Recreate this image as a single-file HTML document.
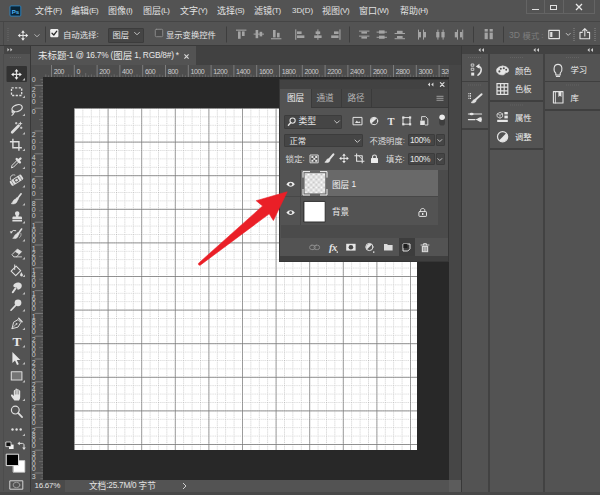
<!DOCTYPE html>
<html lang="zh-CN">
<head>
<meta charset="utf-8">
<title>Photoshop</title>
<style>
*{box-sizing:border-box;margin:0;padding:0}
html,body{width:600px;height:495px;overflow:hidden;background:#535353}
body{font-family:"Liberation Sans","Noto Sans CJK SC",sans-serif;color:#d8d8d8;font-size:9px;position:relative}
.abs{position:absolute}
div,span,svg{position:absolute}
.t{white-space:nowrap;line-height:1}
/* menu */
#menubar{left:0;top:0;width:600px;height:21px;background:#535353}
#menubar .t{top:6.5px;font-size:9px;color:#e2e2e2}
#optbar{left:0;top:21px;width:600px;height:25px;background:#535353;border-top:1px solid #454545;border-bottom:1px solid #3a3a3a}
#tabbar{left:31px;top:46px;width:431px;height:19px;background:#414141}
#tab{left:0;top:0;width:165px;height:19px;background:#535353}
#tools{left:0;top:46px;width:30px;height:449px;background:#535353}
#toolhead{left:3.5px;top:0;width:26.5px;height:7.6px;background:#454545}
#toolsep{left:30px;top:46px;width:1px;height:449px;background:#383838}
#rtop{left:31px;top:65px;width:431px;height:12px;background:#4d4d4d;overflow:hidden}
#rleft{left:31px;top:77px;width:12px;height:403px;background:#4d4d4d}
#view{left:43px;top:77px;width:405.5px;height:403px;background:#282828;overflow:hidden}
#canvas{left:31px;top:30.5px;width:343px;height:342.7px;background:#fff;overflow:hidden}
#vscroll{left:448.5px;top:65px;width:12.5px;height:415px;background:#464646}
#corner{left:448.5px;top:480px;width:12px;height:11.5px;background:#5c5c5c}
#botstrip{left:0;top:491.5px;width:600px;height:3.5px;background:#484848}
#zoomfld{left:31px;top:480px;width:34px;height:12px;background:#4a4a4a}
#status{left:31px;top:480px;width:431px;height:15px}
#rsep{left:461px;top:46px;width:1px;height:449px;background:#383838}
#right{left:462px;top:46px;width:138px;height:449px;background:#424242}
.rcol{top:8px;background:#535353}
.rline{height:1.5px;background:#3f3f3f}
.ptxt{font-size:8.4px;color:#ececec}
/* layers */
#layers{left:279.5px;top:79.5px;width:168px;height:181.2px;background:#535353;box-shadow:0 0 0 1px #363636;overflow:hidden}
#lhead{left:0;top:0;width:170px;height:9px;background:#424242}
#ltabs{left:0;top:9px;width:170px;height:19px;background:#454545;border-bottom:1px solid #3a3a3a}
#ltab1{left:0.5px;top:0;width:30.5px;height:19px;background:#535353}
.dd{background:#454545;border:1px solid #3c3c3c;border-radius:1px}
b{font-weight:normal;font-size:7.9px;letter-spacing:-0.45px;position:static;vertical-align:0.9px}
svg text{font-family:"Liberation Sans","Noto Sans CJK SC",sans-serif}
svg text.serif{font-family:"Liberation Serif",serif}
.rul line{stroke:#909090;stroke-width:0.7}
.rul line.m{stroke:#7c7c7c;stroke-width:0.6}
.rul text{fill:#cccccc;font-size:7px;letter-spacing:-0.45px}
</style>
</head>
<body>
<!-- MENU BAR -->
<div id="menubar">
  <svg style="left:9px;top:4.5px" width="13" height="12" viewBox="0 0 13 12"><rect x="1" y="0.9" width="10.8" height="10.2" rx="1" fill="#0a2436" stroke="#2a86c4" stroke-width="0.9"/><text x="2.7" y="8.7" font-size="6.2" font-weight="bold" fill="#4db4f5">Ps</text></svg>
  <span class="t" style="left:35px">文件<b>(F)</b></span>
  <span class="t" style="left:71px">编辑<b>(E)</b></span>
  <span class="t" style="left:108px">图像<b>(I)</b></span>
  <span class="t" style="left:143px">图层<b>(L)</b></span>
  <span class="t" style="left:180px">文字<b>(Y)</b></span>
  <span class="t" style="left:217px">选择<b>(S)</b></span>
  <span class="t" style="left:254px">滤镜<b>(T)</b></span>
  <span class="t" style="left:292px"><b style="letter-spacing:0">3D(D)</b></span>
  <span class="t" style="left:322px">视图<b>(V)</b></span>
  <span class="t" style="left:359px">窗口<b>(W)</b></span>
  <span class="t" style="left:400px">帮助<b>(H)</b></span>
  <div style="left:526px;top:0;width:69px;height:13.5px;border:1px solid #646464;border-top:none"></div>
  <div style="left:543.7px;top:0;width:1px;height:12.5px;background:#646464"></div>
  <div style="left:563.2px;top:0;width:1px;height:12.5px;background:#646464"></div>
  <div style="left:531.5px;top:8.6px;width:7px;height:1.6px;background:#e0e0e0"></div>
  <div style="left:550.2px;top:4.6px;width:6.8px;height:5.4px;border:1.2px solid #e0e0e0;border-top-width:1.6px"></div>
  <svg style="left:575px;top:3.4px" width="8" height="8" viewBox="0 0 8 8"><path d="M1 1L7 7M7 1L1 7" stroke="#e8e8e8" stroke-width="1.3"/></svg>
</div>

<!-- OPTIONS BAR -->
<div id="optbar">
  <span class="t" style="left:63px;top:9px;font-size:8.4px;color:#e4e4e4">自动选择<b>:</b></span>
  <div class="dd" style="left:108px;top:5.5px;width:35.5px;height:15px"></div>
  <span class="t" style="left:112.5px;top:9px;font-size:8.3px;color:#e4e4e4">图层</span>
  <span class="t" style="left:166px;top:8.5px;font-size:8.3px;color:#e4e4e4">显示变换控件</span>
  <span class="t" style="left:509px;top:9px;font-size:8.3px;color:#7e7e7e"><b style="font-size:8.6px;letter-spacing:0">3D </b><span style="position:static;letter-spacing:0.3px">模式</span><b> :</b></span>
</div>

<!-- TOOLS -->
<div id="tools">
  <div id="toolhead"></div>
</div>
<div id="toolsep"></div>
<div style="left:3px;top:22px;width:1px;height:23px;background:#474747"></div>
<div style="left:3px;top:54px;width:1px;height:437px;background:#4c4c4c"></div>

<!-- DOC TAB -->
<div id="tabbar">
  <div id="tab"><span class="t" style="left:7px;top:5px;font-size:9.5px;color:#e8e8e8">未标题<b style="font-size:8.3px;letter-spacing:-0.2px">-1 @ 16.7% (</b>图层<b style="font-size:8.3px;letter-spacing:-0.2px"> 1, RGB/8#) *</b></span>
  <svg style="left:153px;top:7.5px" width="5" height="5" viewBox="0 0 5 5"><path d="M0.4 0.4L4.6 4.6M4.6 0.4L0.4 4.6" stroke="#d8d8d8" stroke-width="1.1"/></svg></div>
</div>

<!-- RULERS -->
<div id="rtop"><svg class="rul" style="left:12px;top:-1px" width="407" height="13" viewBox="0 0 407 13">
<line class="m" x1="2.8" y1="10.4" x2="2.8" y2="13" />
<line class="m" x1="5.6" y1="11.4" x2="5.6" y2="13" />
<line x1="8.5" y1="0.5" x2="8.5" y2="13" />
<text x="10.7" y="10">200</text>
<line class="m" x1="11.4" y1="11.4" x2="11.4" y2="13" />
<line class="m" x1="14.2" y1="10.4" x2="14.2" y2="13" />
<line class="m" x1="17.0" y1="11.4" x2="17.0" y2="13" />
<line class="m" x1="19.9" y1="9" x2="19.9" y2="13" />
<line class="m" x1="22.8" y1="11.4" x2="22.8" y2="13" />
<line class="m" x1="25.6" y1="10.4" x2="25.6" y2="13" />
<line class="m" x1="28.5" y1="11.4" x2="28.5" y2="13" />
<line x1="31.3" y1="0.5" x2="31.3" y2="13" />
<text x="33.5" y="10">0</text>
<line class="m" x1="34.1" y1="11.4" x2="34.1" y2="13" />
<line class="m" x1="37.0" y1="10.4" x2="37.0" y2="13" />
<line class="m" x1="39.8" y1="11.4" x2="39.8" y2="13" />
<line class="m" x1="42.7" y1="9" x2="42.7" y2="13" />
<line class="m" x1="45.5" y1="11.4" x2="45.5" y2="13" />
<line class="m" x1="48.4" y1="10.4" x2="48.4" y2="13" />
<line class="m" x1="51.2" y1="11.4" x2="51.2" y2="13" />
<line x1="54.1" y1="0.5" x2="54.1" y2="13" />
<text x="56.3" y="10">200</text>
<line class="m" x1="56.9" y1="11.4" x2="56.9" y2="13" />
<line class="m" x1="59.8" y1="10.4" x2="59.8" y2="13" />
<line class="m" x1="62.6" y1="11.4" x2="62.6" y2="13" />
<line class="m" x1="65.5" y1="9" x2="65.5" y2="13" />
<line class="m" x1="68.3" y1="11.4" x2="68.3" y2="13" />
<line class="m" x1="71.2" y1="10.4" x2="71.2" y2="13" />
<line class="m" x1="74.0" y1="11.4" x2="74.0" y2="13" />
<line x1="76.9" y1="0.5" x2="76.9" y2="13" />
<text x="79.1" y="10">400</text>
<line class="m" x1="79.8" y1="11.4" x2="79.8" y2="13" />
<line class="m" x1="82.6" y1="10.4" x2="82.6" y2="13" />
<line class="m" x1="85.5" y1="11.4" x2="85.5" y2="13" />
<line class="m" x1="88.3" y1="9" x2="88.3" y2="13" />
<line class="m" x1="91.2" y1="11.4" x2="91.2" y2="13" />
<line class="m" x1="94.0" y1="10.4" x2="94.0" y2="13" />
<line class="m" x1="96.8" y1="11.4" x2="96.8" y2="13" />
<line x1="99.7" y1="0.5" x2="99.7" y2="13" />
<text x="101.9" y="10">600</text>
<line class="m" x1="102.5" y1="11.4" x2="102.5" y2="13" />
<line class="m" x1="105.4" y1="10.4" x2="105.4" y2="13" />
<line class="m" x1="108.2" y1="11.4" x2="108.2" y2="13" />
<line class="m" x1="111.1" y1="9" x2="111.1" y2="13" />
<line class="m" x1="113.9" y1="11.4" x2="113.9" y2="13" />
<line class="m" x1="116.8" y1="10.4" x2="116.8" y2="13" />
<line class="m" x1="119.6" y1="11.4" x2="119.6" y2="13" />
<line x1="122.5" y1="0.5" x2="122.5" y2="13" />
<text x="124.7" y="10">800</text>
<line class="m" x1="125.3" y1="11.4" x2="125.3" y2="13" />
<line class="m" x1="128.2" y1="10.4" x2="128.2" y2="13" />
<line class="m" x1="131.1" y1="11.4" x2="131.1" y2="13" />
<line class="m" x1="133.9" y1="9" x2="133.9" y2="13" />
<line class="m" x1="136.8" y1="11.4" x2="136.8" y2="13" />
<line class="m" x1="139.6" y1="10.4" x2="139.6" y2="13" />
<line class="m" x1="142.4" y1="11.4" x2="142.4" y2="13" />
<line x1="145.3" y1="0.5" x2="145.3" y2="13" />
<text x="147.5" y="10">1000</text>
<line class="m" x1="148.2" y1="11.4" x2="148.2" y2="13" />
<line class="m" x1="151.0" y1="10.4" x2="151.0" y2="13" />
<line class="m" x1="153.9" y1="11.4" x2="153.9" y2="13" />
<line class="m" x1="156.7" y1="9" x2="156.7" y2="13" />
<line class="m" x1="159.6" y1="11.4" x2="159.6" y2="13" />
<line class="m" x1="162.4" y1="10.4" x2="162.4" y2="13" />
<line class="m" x1="165.2" y1="11.4" x2="165.2" y2="13" />
<line x1="168.1" y1="0.5" x2="168.1" y2="13" />
<text x="170.3" y="10">1200</text>
<line class="m" x1="171.0" y1="11.4" x2="171.0" y2="13" />
<line class="m" x1="173.8" y1="10.4" x2="173.8" y2="13" />
<line class="m" x1="176.7" y1="11.4" x2="176.7" y2="13" />
<line class="m" x1="179.5" y1="9" x2="179.5" y2="13" />
<line class="m" x1="182.4" y1="11.4" x2="182.4" y2="13" />
<line class="m" x1="185.2" y1="10.4" x2="185.2" y2="13" />
<line class="m" x1="188.1" y1="11.4" x2="188.1" y2="13" />
<line x1="190.9" y1="0.5" x2="190.9" y2="13" />
<text x="193.1" y="10">1400</text>
<line class="m" x1="193.7" y1="11.4" x2="193.7" y2="13" />
<line class="m" x1="196.6" y1="10.4" x2="196.6" y2="13" />
<line class="m" x1="199.4" y1="11.4" x2="199.4" y2="13" />
<line class="m" x1="202.3" y1="9" x2="202.3" y2="13" />
<line class="m" x1="205.1" y1="11.4" x2="205.1" y2="13" />
<line class="m" x1="208.0" y1="10.4" x2="208.0" y2="13" />
<line class="m" x1="210.8" y1="11.4" x2="210.8" y2="13" />
<line x1="213.7" y1="0.5" x2="213.7" y2="13" />
<text x="215.9" y="10">1600</text>
<line class="m" x1="216.6" y1="11.4" x2="216.6" y2="13" />
<line class="m" x1="219.4" y1="10.4" x2="219.4" y2="13" />
<line class="m" x1="222.2" y1="11.4" x2="222.2" y2="13" />
<line class="m" x1="225.1" y1="9" x2="225.1" y2="13" />
<line class="m" x1="227.9" y1="11.4" x2="227.9" y2="13" />
<line class="m" x1="230.8" y1="10.4" x2="230.8" y2="13" />
<line class="m" x1="233.6" y1="11.4" x2="233.6" y2="13" />
<line x1="236.5" y1="0.5" x2="236.5" y2="13" />
<text x="238.7" y="10">1800</text>
<line class="m" x1="239.4" y1="11.4" x2="239.4" y2="13" />
<line class="m" x1="242.2" y1="10.4" x2="242.2" y2="13" />
<line class="m" x1="245.1" y1="11.4" x2="245.1" y2="13" />
<line class="m" x1="247.9" y1="9" x2="247.9" y2="13" />
<line class="m" x1="250.8" y1="11.4" x2="250.8" y2="13" />
<line class="m" x1="253.6" y1="10.4" x2="253.6" y2="13" />
<line class="m" x1="256.4" y1="11.4" x2="256.4" y2="13" />
<line x1="259.3" y1="0.5" x2="259.3" y2="13" />
<text x="261.5" y="10">2000</text>
<line class="m" x1="262.2" y1="11.4" x2="262.2" y2="13" />
<line class="m" x1="265.0" y1="10.4" x2="265.0" y2="13" />
<line class="m" x1="267.9" y1="11.4" x2="267.9" y2="13" />
<line class="m" x1="270.7" y1="9" x2="270.7" y2="13" />
<line class="m" x1="273.6" y1="11.4" x2="273.6" y2="13" />
<line class="m" x1="276.4" y1="10.4" x2="276.4" y2="13" />
<line class="m" x1="279.2" y1="11.4" x2="279.2" y2="13" />
<line x1="282.1" y1="0.5" x2="282.1" y2="13" />
<text x="284.3" y="10">2200</text>
<line class="m" x1="285.0" y1="11.4" x2="285.0" y2="13" />
<line class="m" x1="287.8" y1="10.4" x2="287.8" y2="13" />
<line class="m" x1="290.7" y1="11.4" x2="290.7" y2="13" />
<line class="m" x1="293.5" y1="9" x2="293.5" y2="13" />
<line class="m" x1="296.4" y1="11.4" x2="296.4" y2="13" />
<line class="m" x1="299.2" y1="10.4" x2="299.2" y2="13" />
<line class="m" x1="302.1" y1="11.4" x2="302.1" y2="13" />
<line x1="304.9" y1="0.5" x2="304.9" y2="13" />
<text x="307.1" y="10">2400</text>
<line class="m" x1="307.8" y1="11.4" x2="307.8" y2="13" />
<line class="m" x1="310.6" y1="10.4" x2="310.6" y2="13" />
<line class="m" x1="313.5" y1="11.4" x2="313.5" y2="13" />
<line class="m" x1="316.3" y1="9" x2="316.3" y2="13" />
<line class="m" x1="319.2" y1="11.4" x2="319.2" y2="13" />
<line class="m" x1="322.0" y1="10.4" x2="322.0" y2="13" />
<line class="m" x1="324.9" y1="11.4" x2="324.9" y2="13" />
<line x1="327.7" y1="0.5" x2="327.7" y2="13" />
<text x="329.9" y="10">2600</text>
<line class="m" x1="330.6" y1="11.4" x2="330.6" y2="13" />
<line class="m" x1="333.4" y1="10.4" x2="333.4" y2="13" />
<line class="m" x1="336.3" y1="11.4" x2="336.3" y2="13" />
<line class="m" x1="339.1" y1="9" x2="339.1" y2="13" />
<line class="m" x1="342.0" y1="11.4" x2="342.0" y2="13" />
<line class="m" x1="344.8" y1="10.4" x2="344.8" y2="13" />
<line class="m" x1="347.7" y1="11.4" x2="347.7" y2="13" />
<line x1="350.5" y1="0.5" x2="350.5" y2="13" />
<text x="352.7" y="10">2800</text>
<line class="m" x1="353.4" y1="11.4" x2="353.4" y2="13" />
<line class="m" x1="356.2" y1="10.4" x2="356.2" y2="13" />
<line class="m" x1="359.1" y1="11.4" x2="359.1" y2="13" />
<line class="m" x1="361.9" y1="9" x2="361.9" y2="13" />
<line class="m" x1="364.8" y1="11.4" x2="364.8" y2="13" />
<line class="m" x1="367.6" y1="10.4" x2="367.6" y2="13" />
<line class="m" x1="370.4" y1="11.4" x2="370.4" y2="13" />
<line x1="373.3" y1="0.5" x2="373.3" y2="13" />
<text x="375.5" y="10">3000</text>
<line class="m" x1="376.2" y1="11.4" x2="376.2" y2="13" />
<line class="m" x1="379.0" y1="10.4" x2="379.0" y2="13" />
<line class="m" x1="381.9" y1="11.4" x2="381.9" y2="13" />
<line class="m" x1="384.7" y1="9" x2="384.7" y2="13" />
<line class="m" x1="387.6" y1="11.4" x2="387.6" y2="13" />
<line class="m" x1="390.4" y1="10.4" x2="390.4" y2="13" />
<line class="m" x1="393.2" y1="11.4" x2="393.2" y2="13" />
<line x1="396.1" y1="0.5" x2="396.1" y2="13" />
<text x="398.3" y="10">3200</text>
<line class="m" x1="399.0" y1="11.4" x2="399.0" y2="13" />
<line class="m" x1="401.8" y1="10.4" x2="401.8" y2="13" />
<line class="m" x1="404.7" y1="11.4" x2="404.7" y2="13" />
</svg></div>
<div id="rleft"><svg class="rul" style="left:0;top:0" width="12" height="403" viewBox="0 0 12 403">
<text x="2.5" y="4.6" text-anchor="middle">0</text>
<line class="m" x1="9.4" y1="2.7" x2="12" y2="2.7" />
<line class="m" x1="10.4" y1="5.5" x2="12" y2="5.5" />
<line x1="3.5" y1="8.4" x2="12" y2="8.4" />
<text x="2.5" y="14.6" text-anchor="middle">2</text>
<text x="2.5" y="21.0" text-anchor="middle">0</text>
<text x="2.5" y="27.4" text-anchor="middle">0</text>
<line class="m" x1="10.4" y1="11.2" x2="12" y2="11.2" />
<line class="m" x1="9.4" y1="14.1" x2="12" y2="14.1" />
<line class="m" x1="10.4" y1="17.0" x2="12" y2="17.0" />
<line class="m" x1="8" y1="19.8" x2="12" y2="19.8" />
<line class="m" x1="10.4" y1="22.7" x2="12" y2="22.7" />
<line class="m" x1="9.4" y1="25.5" x2="12" y2="25.5" />
<line class="m" x1="10.4" y1="28.4" x2="12" y2="28.4" />
<line x1="3.5" y1="31.2" x2="12" y2="31.2" />
<text x="2.5" y="37.4" text-anchor="middle">0</text>
<line class="m" x1="10.4" y1="34.0" x2="12" y2="34.0" />
<line class="m" x1="9.4" y1="36.9" x2="12" y2="36.9" />
<line class="m" x1="10.4" y1="39.8" x2="12" y2="39.8" />
<line class="m" x1="8" y1="42.6" x2="12" y2="42.6" />
<line class="m" x1="10.4" y1="45.5" x2="12" y2="45.5" />
<line class="m" x1="9.4" y1="48.3" x2="12" y2="48.3" />
<line class="m" x1="10.4" y1="51.2" x2="12" y2="51.2" />
<line x1="3.5" y1="54.0" x2="12" y2="54.0" />
<text x="2.5" y="60.2" text-anchor="middle">2</text>
<text x="2.5" y="66.6" text-anchor="middle">0</text>
<text x="2.5" y="73.0" text-anchor="middle">0</text>
<line class="m" x1="10.4" y1="56.8" x2="12" y2="56.8" />
<line class="m" x1="9.4" y1="59.7" x2="12" y2="59.7" />
<line class="m" x1="10.4" y1="62.6" x2="12" y2="62.6" />
<line class="m" x1="8" y1="65.4" x2="12" y2="65.4" />
<line class="m" x1="10.4" y1="68.2" x2="12" y2="68.2" />
<line class="m" x1="9.4" y1="71.1" x2="12" y2="71.1" />
<line class="m" x1="10.4" y1="73.9" x2="12" y2="73.9" />
<line x1="3.5" y1="76.8" x2="12" y2="76.8" />
<text x="2.5" y="83.0" text-anchor="middle">4</text>
<text x="2.5" y="89.4" text-anchor="middle">0</text>
<text x="2.5" y="95.8" text-anchor="middle">0</text>
<line class="m" x1="10.4" y1="79.7" x2="12" y2="79.7" />
<line class="m" x1="9.4" y1="82.5" x2="12" y2="82.5" />
<line class="m" x1="10.4" y1="85.4" x2="12" y2="85.4" />
<line class="m" x1="8" y1="88.2" x2="12" y2="88.2" />
<line class="m" x1="10.4" y1="91.1" x2="12" y2="91.1" />
<line class="m" x1="9.4" y1="93.9" x2="12" y2="93.9" />
<line class="m" x1="10.4" y1="96.8" x2="12" y2="96.8" />
<line x1="3.5" y1="99.6" x2="12" y2="99.6" />
<text x="2.5" y="105.8" text-anchor="middle">6</text>
<text x="2.5" y="112.2" text-anchor="middle">0</text>
<text x="2.5" y="118.6" text-anchor="middle">0</text>
<line class="m" x1="10.4" y1="102.5" x2="12" y2="102.5" />
<line class="m" x1="9.4" y1="105.3" x2="12" y2="105.3" />
<line class="m" x1="10.4" y1="108.2" x2="12" y2="108.2" />
<line class="m" x1="8" y1="111.0" x2="12" y2="111.0" />
<line class="m" x1="10.4" y1="113.9" x2="12" y2="113.9" />
<line class="m" x1="9.4" y1="116.7" x2="12" y2="116.7" />
<line class="m" x1="10.4" y1="119.6" x2="12" y2="119.6" />
<line x1="3.5" y1="122.4" x2="12" y2="122.4" />
<text x="2.5" y="128.6" text-anchor="middle">8</text>
<text x="2.5" y="135.0" text-anchor="middle">0</text>
<text x="2.5" y="141.4" text-anchor="middle">0</text>
<line class="m" x1="10.4" y1="125.2" x2="12" y2="125.2" />
<line class="m" x1="9.4" y1="128.1" x2="12" y2="128.1" />
<line class="m" x1="10.4" y1="131.0" x2="12" y2="131.0" />
<line class="m" x1="8" y1="133.8" x2="12" y2="133.8" />
<line class="m" x1="10.4" y1="136.7" x2="12" y2="136.7" />
<line class="m" x1="9.4" y1="139.5" x2="12" y2="139.5" />
<line class="m" x1="10.4" y1="142.3" x2="12" y2="142.3" />
<line x1="3.5" y1="145.2" x2="12" y2="145.2" />
<text x="2.5" y="150.8" text-anchor="middle" font-size="5.2" fill="#a4a4a4">1</text>
<text x="2.5" y="155.8" text-anchor="middle" font-size="5.2" fill="#a4a4a4">0</text>
<text x="2.5" y="160.8" text-anchor="middle" font-size="5.2" fill="#a4a4a4">0</text>
<text x="2.5" y="165.8" text-anchor="middle" font-size="5.2" fill="#a4a4a4">0</text>
<line class="m" x1="10.4" y1="148.0" x2="12" y2="148.0" />
<line class="m" x1="9.4" y1="150.9" x2="12" y2="150.9" />
<line class="m" x1="10.4" y1="153.8" x2="12" y2="153.8" />
<line class="m" x1="8" y1="156.6" x2="12" y2="156.6" />
<line class="m" x1="10.4" y1="159.4" x2="12" y2="159.4" />
<line class="m" x1="9.4" y1="162.3" x2="12" y2="162.3" />
<line class="m" x1="10.4" y1="165.1" x2="12" y2="165.1" />
<line x1="3.5" y1="168.0" x2="12" y2="168.0" />
<text x="2.5" y="173.6" text-anchor="middle" font-size="5.2" fill="#a4a4a4">1</text>
<text x="2.5" y="178.6" text-anchor="middle" font-size="5.2" fill="#a4a4a4">2</text>
<text x="2.5" y="183.6" text-anchor="middle" font-size="5.2" fill="#a4a4a4">0</text>
<text x="2.5" y="188.6" text-anchor="middle" font-size="5.2" fill="#a4a4a4">0</text>
<line class="m" x1="10.4" y1="170.8" x2="12" y2="170.8" />
<line class="m" x1="9.4" y1="173.7" x2="12" y2="173.7" />
<line class="m" x1="10.4" y1="176.6" x2="12" y2="176.6" />
<line class="m" x1="8" y1="179.4" x2="12" y2="179.4" />
<line class="m" x1="10.4" y1="182.2" x2="12" y2="182.2" />
<line class="m" x1="9.4" y1="185.1" x2="12" y2="185.1" />
<line class="m" x1="10.4" y1="187.9" x2="12" y2="187.9" />
<line x1="3.5" y1="190.8" x2="12" y2="190.8" />
<text x="2.5" y="196.4" text-anchor="middle" font-size="5.2" fill="#a4a4a4">1</text>
<text x="2.5" y="201.4" text-anchor="middle" font-size="5.2" fill="#a4a4a4">4</text>
<text x="2.5" y="206.4" text-anchor="middle" font-size="5.2" fill="#a4a4a4">0</text>
<text x="2.5" y="211.4" text-anchor="middle" font-size="5.2" fill="#a4a4a4">0</text>
<line class="m" x1="10.4" y1="193.7" x2="12" y2="193.7" />
<line class="m" x1="9.4" y1="196.5" x2="12" y2="196.5" />
<line class="m" x1="10.4" y1="199.4" x2="12" y2="199.4" />
<line class="m" x1="8" y1="202.2" x2="12" y2="202.2" />
<line class="m" x1="10.4" y1="205.1" x2="12" y2="205.1" />
<line class="m" x1="9.4" y1="207.9" x2="12" y2="207.9" />
<line class="m" x1="10.4" y1="210.8" x2="12" y2="210.8" />
<line x1="3.5" y1="213.6" x2="12" y2="213.6" />
<text x="2.5" y="219.2" text-anchor="middle" font-size="5.2" fill="#a4a4a4">1</text>
<text x="2.5" y="224.2" text-anchor="middle" font-size="5.2" fill="#a4a4a4">6</text>
<text x="2.5" y="229.2" text-anchor="middle" font-size="5.2" fill="#a4a4a4">0</text>
<text x="2.5" y="234.2" text-anchor="middle" font-size="5.2" fill="#a4a4a4">0</text>
<line class="m" x1="10.4" y1="216.5" x2="12" y2="216.5" />
<line class="m" x1="9.4" y1="219.3" x2="12" y2="219.3" />
<line class="m" x1="10.4" y1="222.2" x2="12" y2="222.2" />
<line class="m" x1="8" y1="225.0" x2="12" y2="225.0" />
<line class="m" x1="10.4" y1="227.9" x2="12" y2="227.9" />
<line class="m" x1="9.4" y1="230.7" x2="12" y2="230.7" />
<line class="m" x1="10.4" y1="233.6" x2="12" y2="233.6" />
<line x1="3.5" y1="236.4" x2="12" y2="236.4" />
<text x="2.5" y="242.0" text-anchor="middle" font-size="5.2" fill="#a4a4a4">1</text>
<text x="2.5" y="247.0" text-anchor="middle" font-size="5.2" fill="#a4a4a4">8</text>
<text x="2.5" y="252.0" text-anchor="middle" font-size="5.2" fill="#a4a4a4">0</text>
<text x="2.5" y="257.0" text-anchor="middle" font-size="5.2" fill="#a4a4a4">0</text>
<line class="m" x1="10.4" y1="239.3" x2="12" y2="239.3" />
<line class="m" x1="9.4" y1="242.1" x2="12" y2="242.1" />
<line class="m" x1="10.4" y1="245.0" x2="12" y2="245.0" />
<line class="m" x1="8" y1="247.8" x2="12" y2="247.8" />
<line class="m" x1="10.4" y1="250.7" x2="12" y2="250.7" />
<line class="m" x1="9.4" y1="253.5" x2="12" y2="253.5" />
<line class="m" x1="10.4" y1="256.4" x2="12" y2="256.4" />
<line x1="3.5" y1="259.2" x2="12" y2="259.2" />
<text x="2.5" y="264.8" text-anchor="middle" font-size="5.2" fill="#a4a4a4">2</text>
<text x="2.5" y="269.8" text-anchor="middle" font-size="5.2" fill="#a4a4a4">0</text>
<text x="2.5" y="274.8" text-anchor="middle" font-size="5.2" fill="#a4a4a4">0</text>
<text x="2.5" y="279.8" text-anchor="middle" font-size="5.2" fill="#a4a4a4">0</text>
<line class="m" x1="10.4" y1="262.1" x2="12" y2="262.1" />
<line class="m" x1="9.4" y1="264.9" x2="12" y2="264.9" />
<line class="m" x1="10.4" y1="267.8" x2="12" y2="267.8" />
<line class="m" x1="8" y1="270.6" x2="12" y2="270.6" />
<line class="m" x1="10.4" y1="273.4" x2="12" y2="273.4" />
<line class="m" x1="9.4" y1="276.3" x2="12" y2="276.3" />
<line class="m" x1="10.4" y1="279.1" x2="12" y2="279.1" />
<line x1="3.5" y1="282.0" x2="12" y2="282.0" />
<text x="2.5" y="287.6" text-anchor="middle" font-size="5.2" fill="#a4a4a4">2</text>
<text x="2.5" y="292.6" text-anchor="middle" font-size="5.2" fill="#a4a4a4">2</text>
<text x="2.5" y="297.6" text-anchor="middle" font-size="5.2" fill="#a4a4a4">0</text>
<text x="2.5" y="302.6" text-anchor="middle" font-size="5.2" fill="#a4a4a4">0</text>
<line class="m" x1="10.4" y1="284.9" x2="12" y2="284.9" />
<line class="m" x1="9.4" y1="287.7" x2="12" y2="287.7" />
<line class="m" x1="10.4" y1="290.6" x2="12" y2="290.6" />
<line class="m" x1="8" y1="293.4" x2="12" y2="293.4" />
<line class="m" x1="10.4" y1="296.2" x2="12" y2="296.2" />
<line class="m" x1="9.4" y1="299.1" x2="12" y2="299.1" />
<line class="m" x1="10.4" y1="301.9" x2="12" y2="301.9" />
<line x1="3.5" y1="304.8" x2="12" y2="304.8" />
<text x="2.5" y="310.4" text-anchor="middle" font-size="5.2" fill="#a4a4a4">2</text>
<text x="2.5" y="315.4" text-anchor="middle" font-size="5.2" fill="#a4a4a4">4</text>
<text x="2.5" y="320.4" text-anchor="middle" font-size="5.2" fill="#a4a4a4">0</text>
<text x="2.5" y="325.4" text-anchor="middle" font-size="5.2" fill="#a4a4a4">0</text>
<line class="m" x1="10.4" y1="307.7" x2="12" y2="307.7" />
<line class="m" x1="9.4" y1="310.5" x2="12" y2="310.5" />
<line class="m" x1="10.4" y1="313.4" x2="12" y2="313.4" />
<line class="m" x1="8" y1="316.2" x2="12" y2="316.2" />
<line class="m" x1="10.4" y1="319.1" x2="12" y2="319.1" />
<line class="m" x1="9.4" y1="321.9" x2="12" y2="321.9" />
<line class="m" x1="10.4" y1="324.8" x2="12" y2="324.8" />
<line x1="3.5" y1="327.6" x2="12" y2="327.6" />
<text x="2.5" y="333.2" text-anchor="middle" font-size="5.2" fill="#a4a4a4">2</text>
<text x="2.5" y="338.2" text-anchor="middle" font-size="5.2" fill="#a4a4a4">6</text>
<text x="2.5" y="343.2" text-anchor="middle" font-size="5.2" fill="#a4a4a4">0</text>
<text x="2.5" y="348.2" text-anchor="middle" font-size="5.2" fill="#a4a4a4">0</text>
<line class="m" x1="10.4" y1="330.5" x2="12" y2="330.5" />
<line class="m" x1="9.4" y1="333.3" x2="12" y2="333.3" />
<line class="m" x1="10.4" y1="336.2" x2="12" y2="336.2" />
<line class="m" x1="8" y1="339.0" x2="12" y2="339.0" />
<line class="m" x1="10.4" y1="341.9" x2="12" y2="341.9" />
<line class="m" x1="9.4" y1="344.7" x2="12" y2="344.7" />
<line class="m" x1="10.4" y1="347.6" x2="12" y2="347.6" />
<line x1="3.5" y1="350.4" x2="12" y2="350.4" />
<text x="2.5" y="356.0" text-anchor="middle" font-size="5.2" fill="#a4a4a4">2</text>
<text x="2.5" y="361.0" text-anchor="middle" font-size="5.2" fill="#a4a4a4">8</text>
<text x="2.5" y="366.0" text-anchor="middle" font-size="5.2" fill="#a4a4a4">0</text>
<text x="2.5" y="371.0" text-anchor="middle" font-size="5.2" fill="#a4a4a4">0</text>
<line class="m" x1="10.4" y1="353.2" x2="12" y2="353.2" />
<line class="m" x1="9.4" y1="356.1" x2="12" y2="356.1" />
<line class="m" x1="10.4" y1="358.9" x2="12" y2="358.9" />
<line class="m" x1="8" y1="361.8" x2="12" y2="361.8" />
<line class="m" x1="10.4" y1="364.6" x2="12" y2="364.6" />
<line class="m" x1="9.4" y1="367.5" x2="12" y2="367.5" />
<line class="m" x1="10.4" y1="370.3" x2="12" y2="370.3" />
<line x1="3.5" y1="373.2" x2="12" y2="373.2" />
<text x="2.5" y="378.8" text-anchor="middle" font-size="5.2" fill="#a4a4a4">3</text>
<text x="2.5" y="383.8" text-anchor="middle" font-size="5.2" fill="#a4a4a4">0</text>
<text x="2.5" y="388.8" text-anchor="middle" font-size="5.2" fill="#a4a4a4">0</text>
<text x="2.5" y="393.8" text-anchor="middle" font-size="5.2" fill="#a4a4a4">0</text>
<line class="m" x1="10.4" y1="376.1" x2="12" y2="376.1" />
<line class="m" x1="9.4" y1="378.9" x2="12" y2="378.9" />
<line class="m" x1="10.4" y1="381.8" x2="12" y2="381.8" />
<line class="m" x1="8" y1="384.6" x2="12" y2="384.6" />
<line class="m" x1="10.4" y1="387.4" x2="12" y2="387.4" />
<line class="m" x1="9.4" y1="390.3" x2="12" y2="390.3" />
<line class="m" x1="10.4" y1="393.1" x2="12" y2="393.1" />
<line x1="3.5" y1="396.0" x2="12" y2="396.0" />
<text x="2.5" y="401.6" text-anchor="middle" font-size="5.2" fill="#a4a4a4">3</text>
<line class="m" x1="10.4" y1="398.9" x2="12" y2="398.9" />
<line class="m" x1="9.4" y1="401.7" x2="12" y2="401.7" />
</svg></div>

<!-- VIEW -->
<div id="view">
  <div id="canvas">
    <svg style="left:0;top:0" width="343" height="343" viewBox="0 0 343 343">
      <defs>
        <pattern id="minor" width="8.4" height="8.4" patternUnits="userSpaceOnUse"><path d="M0 0H8.4M0 0V8.4" stroke="#a6a6a6" stroke-width="1" stroke-dasharray="1.05 1.05" fill="none"/></pattern>
        <pattern id="major" width="33.6" height="33.6" patternUnits="userSpaceOnUse"><path d="M0 0H33.6M0 0V33.6" stroke="#747474" stroke-width="1.3" fill="none"/></pattern>
      </defs>
      <rect width="343" height="343" fill="#fff"/>
      <rect width="343" height="343" fill="url(#minor)"/>
      <rect width="343" height="343" fill="url(#major)"/>
    </svg>
  </div>
</div>
<div id="vscroll"></div>
<div id="corner"></div>

<!-- STATUS -->
<div id="zoomfld"></div>
<div id="status">
  <span class="t" style="left:3.5px;top:2.4px;font-size:9px;color:#e4e4e4"><b style="font-size:8px;letter-spacing:-0.25px">16.67%</b></span>
  <span class="t" style="left:58px;top:2.4px;font-size:8.6px;color:#e4e4e4">文档<b style="font-size:8.2px;letter-spacing:-0.2px">:25.7M/0 </b>字节</span>
  <svg style="left:151px;top:2px" width="5" height="8" viewBox="0 0 5 8"><path d="M1 1L4 4L1 7" stroke="#cfcfcf" stroke-width="1" fill="none"/></svg>
</div>

<!-- RIGHT -->
<div id="rsep"></div>
<div id="right">
  <div class="rcol" style="left:0;width:25.5px;height:441px"></div>
  <div class="rcol" style="left:27.5px;width:53.5px;height:441px"></div>
  <div class="rcol" style="left:83px;width:55px;height:441px"></div>
  <div class="rline" style="left:0;top:34.5px;width:25.5px"></div>
  <div class="rline" style="left:0;top:82px;width:25.5px"></div>
  <div class="rline" style="left:27.5px;top:54px;width:53.5px"></div>
  <div class="rline" style="left:27.5px;top:102px;width:53.5px"></div>
  <div class="rline" style="left:83px;top:34.5px;width:55px"></div>
  <div class="rline" style="left:83px;top:63px;width:55px"></div>
  <span class="t ptxt" style="left:53px;top:20.8px">颜色</span>
  <span class="t ptxt" style="left:53px;top:39.3px">色板</span>
  <span class="t ptxt" style="left:53px;top:67.8px">属性</span>
  <span class="t ptxt" style="left:53px;top:86.9px">调整</span>
  <span class="t ptxt" style="left:108.5px;top:19.7px">学习</span>
  <span class="t ptxt" style="left:108.5px;top:48.2px">库</span>
</div>

<!-- LAYERS PANEL -->
<div id="layers">
  <div id="lhead"></div>
  <div id="ltabs">
    <div id="ltab1"></div>
    <div style="left:31px;top:0;width:1px;height:19px;background:#3a3a3a"></div>
    <div style="left:61px;top:0;width:1px;height:19px;background:#3a3a3a"></div>
    <div style="left:91px;top:0;width:1px;height:19px;background:#3a3a3a"></div>
    <span class="t" style="left:7.5px;top:5.5px;font-size:8.6px;color:#f0f0f0">图层</span>
    <span class="t" style="left:37px;top:5.5px;font-size:8.6px;color:#b4b4b4">通道</span>
    <span class="t" style="left:68px;top:5.5px;font-size:8.6px;color:#b4b4b4">路径</span>
  </div>
  <!-- filter row -->
  <div class="dd" style="left:4px;top:35px;width:58px;height:14px"></div>
  <span class="t" style="left:19px;top:37.5px;font-size:8.8px;color:#e6e6e6">类型</span>
  <!-- blend row -->
  <div class="dd" style="left:4px;top:54.5px;width:79px;height:12.5px"></div>
  <span class="t" style="left:10px;top:57.4px;font-size:8.3px;color:#e8e8e8">正常</span>
  <span class="t" style="left:90px;top:57px;font-size:8.3px;color:#dcdcdc">不透明度<b>:</b></span>
  <div class="dd" style="left:128px;top:54.5px;width:27px;height:12px"></div>
  <div class="dd" style="left:156.5px;top:54.5px;width:9px;height:12px"></div>
  <span class="t" style="left:130.5px;top:56.2px;font-size:8.4px;color:#e8e8e8;letter-spacing:-0.3px">100%</span>
  <!-- lock row -->
  <span class="t" style="left:6px;top:75.3px;font-size:8.5px;color:#dcdcdc">锁定<b>:</b></span>
  <span class="t" style="left:106.5px;top:75.6px;font-size:8.3px;color:#dcdcdc">填充<b>:</b></span>
  <div class="dd" style="left:128px;top:73.5px;width:27px;height:12px"></div>
  <div class="dd" style="left:156.5px;top:73.5px;width:9px;height:12px"></div>
  <span class="t" style="left:130.5px;top:75.2px;font-size:8.4px;color:#e8e8e8;letter-spacing:-0.3px">100%</span>
  <!-- list -->
  <div style="left:1px;top:90.5px;width:168px;height:67.5px;background:#4b4b4b"></div>
  <div style="left:1px;top:90.5px;width:20px;height:54.5px;background:#535353"></div>
  <div style="left:21px;top:90.5px;width:137px;height:25.5px;background:#696969"></div>
  <div style="left:21px;top:117px;width:137px;height:28px;background:#535353"></div>
  <div style="left:1px;top:116px;width:157px;height:1px;background:#474747"></div>
  <div style="left:20.5px;top:90.5px;width:1px;height:54.5px;background:#474747"></div>
  <span class="t" style="left:52.5px;top:100px;font-size:8.6px;color:#f2f2f2">图层 <b style="font-size:8.4px">1</b></span>
  <span class="t" style="left:52.5px;top:128.5px;font-size:8.6px;color:#eaeaea">背景</span>
  <!-- bottom bar -->
  <div style="left:0;top:158px;width:170px;height:18px;background:#535353"></div>
  <div style="left:119px;top:158px;width:16px;height:18px;background:#3d3d3d"></div>
  <div style="left:0;top:176px;width:170px;height:6px;background:#3f3f3f"></div>
</div>

<div id="botstrip"></div>
<!-- ICON OVERLAY -->
<svg id="icons" style="left:0;top:0" width="600" height="495" viewBox="0 0 600 495" fill="none" stroke-linecap="round" stroke-linejoin="round">
<g id="opticons" stroke="#dedede" fill="none" stroke-width="1.2">
<!-- grip -->
<path d="M8 28V41" stroke="#666666" stroke-width="1.2" stroke-dasharray="1 1" stroke-linecap="butt"/>
<!-- move icon -->
<g transform="translate(23,35.5) scale(0.9)"><path d="M-3.6 0H3.6M0 -3.6V3.6" stroke-width="1.2"/><path d="M0 -5.8L-2.1 -3.1H2.1ZM0 5.8L-2.1 3.1H2.1ZM-5.8 0L-3.1 -2.1V2.1ZM5.8 0L3.1 -2.1V2.1Z" fill="#ececec" stroke="none"/></g>
<path d="M34.8 34.6L37 36.8L39.2 34.6" stroke="#b8b8b8" stroke-width="1"/>
<path d="M45.5 26.5V42.5" stroke="#3e3e3e" stroke-width="1" stroke-linecap="butt"/>
<!-- checkbox checked -->
<rect x="50.2" y="29" width="8.2" height="8.2" rx="1.2" fill="#efefef" stroke="none"/>
<path d="M52 33.2L53.8 35L56.8 31.2" stroke="#2c2c2c" stroke-width="1.3"/>
<!-- dropdown chevron -->
<path d="M134.6 32.4L137 34.8L139.4 32.4" stroke="#c4c4c4" stroke-width="1"/>
<!-- checkbox unchecked -->
<rect x="155.3" y="29.3" width="7.4" height="7.4" rx="1" fill="#4a4a4a" stroke="#8e8e8e" stroke-width="0.9"/>
<!-- separators -->
<g stroke="#3e3e3e" stroke-width="1" stroke-linecap="butt"><path d="M226.5 26.5V42.5M349.5 26.5V42.5M473.5 26.5V42.5M503.5 26.5V42.5"/></g>
<!-- align icons -->
<g fill="#a4a4a4" stroke="none">
<!-- align top -->
<rect x="236" y="29.6" width="10.4" height="1.1"/><rect x="238" y="31.4" width="2.6" height="7.4"/><rect x="242" y="31.4" width="2.6" height="4.6"/>
<!-- align vcenter -->
<rect x="253.6" y="33.6" width="10.4" height="1"/><rect x="255.6" y="30" width="2.6" height="8.2"/><rect x="259.6" y="31.8" width="2.6" height="4.6"/>
<!-- align bottom -->
<rect x="271" y="38.2" width="10.4" height="1.1"/><rect x="273" y="30" width="2.6" height="7.4"/><rect x="277" y="32.8" width="2.6" height="4.6"/>
<!-- align left -->
<rect x="295.2" y="29.4" width="1.1" height="10.4"/><rect x="297" y="31.4" width="4.6" height="2.6"/><rect x="297" y="35.4" width="7.4" height="2.6"/>
<!-- align hcenter -->
<rect x="317.4" y="29.4" width="1" height="10.4"/><rect x="315.6" y="31.4" width="4.6" height="2.6"/><rect x="314.2" y="35.4" width="7.4" height="2.6"/>
<!-- align right -->
<rect x="339.4" y="29.4" width="1.1" height="10.4"/><rect x="334" y="31.4" width="4.6" height="2.6"/><rect x="331.2" y="35.4" width="7.4" height="2.6"/>
<!-- distribute top -->
<rect x="359" y="30.6" width="10.4" height="1"/><rect x="361.4" y="31.6" width="5.6" height="2"/><rect x="359" y="35.6" width="10.4" height="1"/><rect x="361.4" y="36.6" width="5.6" height="2"/>
<!-- distribute vcenter -->
<rect x="376.6" y="31.6" width="10.4" height="1"/><rect x="379" y="30.4" width="5.6" height="3.2"/><rect x="376.6" y="36.8" width="10.4" height="1"/><rect x="379" y="35.6" width="5.6" height="3.2"/>
<!-- distribute bottom -->
<rect x="394.6" y="33" width="10.4" height="1"/><rect x="397" y="30.8" width="5.6" height="2.2"/><rect x="394.6" y="38.2" width="10.4" height="1"/><rect x="397" y="36" width="5.6" height="2.2"/>
<!-- distribute left -->
<rect x="418" y="29.6" width="1" height="10"/><rect x="419" y="32" width="2" height="5.4"/><rect x="423" y="29.6" width="1" height="10"/><rect x="424" y="32" width="2" height="5.4"/>
<!-- distribute hcenter -->
<rect x="437.4" y="29.6" width="1" height="10"/><rect x="436.2" y="32" width="3.2" height="5.4"/><rect x="442.6" y="29.6" width="1" height="10"/><rect x="441.4" y="32" width="3.2" height="5.4"/>
<!-- distribute right -->
<rect x="457" y="29.6" width="1" height="10"/><rect x="454.8" y="32" width="2.2" height="5.4"/><rect x="462.2" y="29.6" width="1" height="10"/><rect x="460" y="32" width="2.2" height="5.4"/>
<!-- auto align -->
<rect x="484.6" y="29" width="3.2" height="2.6"/><rect x="489.6" y="29" width="3.2" height="2.6"/><rect x="484.6" y="32.6" width="3.2" height="6.6"/><rect x="489.6" y="32.6" width="3.2" height="6.6"/>
</g>
<!-- workspace icon -->
<rect x="548.8" y="30.4" width="10.6" height="8.2" stroke="#e0e0e0" stroke-width="1.1"/><rect x="550.2" y="32" width="2.2" height="5" fill="#e0e0e0" stroke="none"/>
<path d="M566.2 33.4L568.2 35.4L570.2 33.4" stroke="#c4c4c4" stroke-width="1"/>
<path d="M574 28V41M595 28V41" stroke="#8a8a8a" stroke-width="1" stroke-dasharray="1 1" stroke-linecap="butt"/>
<!-- share -->
<path d="M582.2 32.4H580V38.8H589.6V32.4H587.4" stroke="#e4e4e4" stroke-width="1.1"/><path d="M584.8 36V28.8M582.6 30.8L584.8 28.6L587 30.8" stroke="#e4e4e4" stroke-width="1.1"/>
</g>

<g id="toolicons" stroke="#dedede" fill="none" stroke-width="1.2">
<!-- toolbar header arrows -->
<path d="M7.4 48L9.3 49.8L7.4 51.6ZM10.4 48L12.3 49.8L10.4 51.6Z" fill="#d0d0d0" stroke="none"/>
<!-- grip -->
<path d="M10 57.5H22" stroke="#656565" stroke-width="1" stroke-dasharray="1 1" stroke-linecap="butt"/>
<!-- selected bg -->
<rect x="6.5" y="66" width="20.5" height="16" rx="1" fill="#323232" stroke="none"/>
<!-- move -->
<g transform="translate(16.5,74.4) scale(0.86)"><path d="M-4 0H4M0 -4V4" stroke-width="1.4"/><path d="M0 -6.2L-2.3 -3.3H2.3ZM0 6.2L-2.3 3.3H2.3ZM-6.2 0L-3.3 -2.3V2.3ZM6.2 0L3.3 -2.3V2.3Z" fill="#f0f0f0" stroke="none"/></g>
<!-- marquee -->
<rect x="11.5" y="87.9" width="10.2" height="7.6" stroke-dasharray="2.2 1.4" stroke-linecap="butt" stroke-width="1.3"/>
<!-- lasso -->
<g transform="translate(17,109.5)"><ellipse cx="0.5" cy="-1.2" rx="5.3" ry="3.3" transform="rotate(-18)"/><path d="M-4.2 0.8C-5.6 1.8 -5 3.8 -3.4 3.4C-2 3 -2.6 1.2 -4 1.6M-3.6 3.4C-3.4 4.6 -4 5.4 -5 5.8"/></g>
<!-- magic wand -->
<g transform="translate(16.8,127.6)"><path d="M-4.6 4.6L1.8 -1.8" stroke-width="2.7"/><path d="M3.6 -5.4V-2.6M2.2 -4H5M-0.6 -5.2V-3.6M-1.4 -4.4H0.2M4.4 -0.6V1M3.6 0.2H5.2" stroke-width="0.9"/></g>
<!-- crop -->
<g transform="translate(15.9,144.7)"><path d="M-3 -6V3H6M-6 -3H3V6" stroke-width="1.4" stroke-linecap="butt" stroke-linejoin="miter"/></g>
<!-- eyedropper -->
<g transform="translate(16.5,162.5)"><path d="M-5 5L-4.4 2.8L0.6 -2.2L2.2 -0.6L-2.8 4.4Z" stroke-width="1"/><path d="M0.2 -3.4L3.4 -0.2M1.8 -1.8L4 -4" stroke-width="2.4"/></g>
<!-- healing -->
<g transform="translate(16.5,180.2)"><g transform="rotate(-33)"><rect x="-6.8" y="-2.9" width="13.6" height="5.8" rx="1.4" fill="#dedede" stroke="none"/><rect x="-2.2" y="-2" width="4.4" height="4" fill="#535353" stroke="none"/><rect x="-1.3" y="-1.1" width="2.6" height="2.2" fill="#dedede" stroke="none"/><path d="M-4.6 -2.9V2.9M4.6 -2.9V2.9" stroke="#535353" stroke-width="0.5"/></g><path d="M-5.8 -0.6A3.3 3.3 0 0 1 -1 -4.8" stroke-width="0.9" stroke-dasharray="1.2 1"/></g>
<!-- brush -->
<g transform="translate(16.5,199)"><path d="M4.6 -5.2L0.6 0" stroke-width="1.7"/><path d="M1.4 -1L-1 2" stroke-width="2.8" stroke-linecap="butt"/><path d="M-1.2 0.2C-3.6 0.4 -3.2 3.4 -5.4 4.6C-3 5.6 0.4 4.6 0.8 1.8Z" fill="#dedede" stroke-width="0.5"/></g>
<!-- stamp -->
<g transform="translate(17.2,216.6)"><rect x="-4.8" y="3.4" width="9.6" height="1.5" fill="#dedede" stroke="none"/><path d="M-4.8 2.6V1.2C-4.8 0.4 -4.2 0 -3.4 0H-1.2C-0.8 -1 -2.2 -1.8 -2.2 -3.2C-2.2 -4.5 -1.2 -5.4 0 -5.4C1.2 -5.4 2.2 -4.5 2.2 -3.2C2.2 -1.8 0.8 -1 1.2 0H3.4C4.2 0 4.8 0.4 4.8 1.2V2.6Z" fill="#dedede" stroke="none"/></g>
<!-- history brush -->
<g transform="translate(16.4,234.6)"><path d="M5.2 -5.6L1.6 -0.6" stroke-width="1.6"/><path d="M2.2 -1.6L0.2 1.2" stroke-width="2.6" stroke-linecap="butt"/><path d="M0 -0.4C-2.2 -0.2 -1.8 2.6 -3.8 3.6C-1.6 4.6 1.4 3.8 1.8 1.2Z" fill="#dedede" stroke-width="0.5"/><path d="M-5.2 -2.4A3.6 3.6 0 0 1 -0.6 -4" stroke-width="1"/><path d="M-6.6 -3.4L-5.4 -0.8L-3.6 -2.8Z" fill="#dedede" stroke="none"/><path d="M4.4 -1.4C5 0.4 4.4 2 3.2 3" stroke-width="0.7" stroke-dasharray="1 0.9"/></g>
<!-- eraser -->
<g transform="translate(17,253) scale(0.84)"><path d="M-5.6 1.6L0.4 -4.6L5.4 -1.6L-0.6 4.6H-3.4Z" stroke-width="1.1"/><path d="M-2.4 -1.6L0.4 -4.6L5.4 -1.6L2.6 1.4Z" fill="#dedede" stroke="none"/><path d="M-0.6 4.6H5.4" stroke-width="1"/></g>
<!-- bucket -->
<g transform="translate(16.5,270.5)"><path d="M-5.4 0.6L-0.4 -4.4L4.2 0.2L-0.8 5.2Z" stroke-width="1.1"/><path d="M-1.8 -5.6L-1.8 -1" stroke-width="1"/><path d="M4.6 1.4C5.6 2.8 6.4 3.8 6.4 4.6C6.4 5.6 5.6 6 5 6C4.2 6 3.6 5.4 3.6 4.6C3.6 3.6 4.4 2.8 4.6 1.4Z" fill="#dedede" stroke="none"/></g>
<!-- smudge -->
<g transform="translate(17,287.6)"><path d="M-4.2 4.6L-1.4 0.6" stroke-width="2"/><path d="M-3.8 -1.6C-3.4 -5 1.8 -6.4 4 -4C6 -1.6 4 2.4 0.6 2.2C0.4 0.6 -0.4 -0.6 -1.6 -0.4C-2.6 -0.2 -3.2 -0.6 -3.8 -1.6Z" fill="#dedede" stroke="none"/></g>
<!-- dodge -->
<g transform="translate(16,305)"><circle cx="2" cy="-2.2" r="3.4" fill="#dedede" stroke="none"/><path d="M-0.6 0.6L-5 5.2" stroke-width="1.6"/></g>
<!-- pen -->
<g transform="translate(16.8,323.6) scale(0.88)"><path d="M-5.4 5.4L-3.6 -1.6L1.4 -4.6L4.6 -1.4L1.6 3.6Z" stroke-width="1.1"/><path d="M-5.4 5.4L-0.8 0.8" stroke-width="0.9"/><circle cx="-0.2" cy="0.2" r="1" fill="#dedede" stroke="none"/><path d="M2.2 -6L6 -2.2" stroke-width="1.6"/></g>
<!-- T -->
<text x="17" y="345.6" text-anchor="middle" class="serif" font-weight="bold" font-size="13.4" fill="#e8e8e8" stroke="none">T</text>
<!-- path select -->
<path d="M12.4 352L12.4 363L15 360.6L17 365L18.8 364.2L16.8 360L20.4 360Z" fill="#e6e6e6" stroke="none"/>
<!-- rectangle -->
<rect x="11.3" y="371.8" width="10.6" height="8.2" fill="#757575" stroke="#d8d8d8" stroke-width="1.1"/>
<!-- hand -->
<g transform="translate(17,394.5)"><path d="M-2.6 6C-3.6 4.2 -5.6 2.6 -6 1C-6.2 0 -5 -0.4 -4.2 0.4L-3.2 1.6V-3.6C-3.2 -4.8 -1.6 -4.8 -1.6 -3.6V-5C-1.6 -6.2 0 -6.2 0 -5V-4.6C0 -5.8 1.6 -5.8 1.6 -4.6V-3.6C1.6 -4.6 3.2 -4.6 3.2 -3.6V2C3.2 3.6 2.8 4.8 2 6Z" fill="#e4e4e4" stroke="none"/><path d="M-1.6 -3.4V-0.4M0 -4.4V-0.4M1.6 -3.4V-0.4" stroke="#535353" stroke-width="0.5"/></g>
<!-- zoom -->
<g transform="translate(16.5,411.5)"><circle cx="-1.2" cy="-1.4" r="3.9" stroke-width="1.2"/><path d="M1.8 1.6L5.6 5.6" stroke-width="1.7"/></g>
<!-- dots -->
<g fill="#e0e0e0" stroke="none"><circle cx="12.5" cy="429.5" r="1.2"/><circle cx="16.6" cy="429.5" r="1.2"/><circle cx="20.7" cy="429.5" r="1.2"/></g>
<!-- corner triangles -->
<g fill="#bdbdbd" stroke="none">
<path d="M25 78.0V80.6H22.4Z"/>
<path d="M25 95.5V98.1H22.4Z"/>
<path d="M25 113.5V116.1H22.4Z"/>
<path d="M25 132.0V134.6H22.4Z"/>
<path d="M25 148.5V151.1H22.4Z"/>
<path d="M25 166.5V169.1H22.4Z"/>
<path d="M25 185.0V187.6H22.4Z"/>
<path d="M25 203.0V205.6H22.4Z"/>
<path d="M25 221.0V223.6H22.4Z"/>
<path d="M25 239.0V241.6H22.4Z"/>
<path d="M25 257.0V259.6H22.4Z"/>
<path d="M25 274.5V277.1H22.4Z"/>
<path d="M25 292.0V294.6H22.4Z"/>
<path d="M25 309.0V311.6H22.4Z"/>
<path d="M25 327.5V330.1H22.4Z"/>
<path d="M25 345.0V347.6H22.4Z"/>
<path d="M25 362.0V364.6H22.4Z"/>
<path d="M25 380.0V382.6H22.4Z"/>
<path d="M25 398.5V401.1H22.4Z"/>
<path d="M25 433.5V436.1H22.4Z"/>
</g>
<!-- default colours -->
<rect x="9" y="444.6" width="4.6" height="4.4" fill="#f4f4f4" stroke="none"/>
<rect x="6.2" y="442" width="4.8" height="4.6" fill="#101010" stroke="#e8e8e8" stroke-width="0.8"/>
<!-- swap -->
<path d="M19 443.4H22.4C23.4 443.4 24 444 24 445V448.2" stroke-width="1"/>
<path d="M17.4 443.4L19.8 441.6V445.2ZM24 450L22.2 447.6H25.8Z" fill="#e0e0e0" stroke="none"/>
<!-- fg/bg -->
<rect x="13.4" y="460.6" width="11.4" height="11.6" fill="#ffffff" stroke="#cfcfcf" stroke-width="0.8"/>
<rect x="6.6" y="454.2" width="12" height="11.4" fill="#000000" stroke="#e6e6e6" stroke-width="1"/>
<!-- quick mask -->
<rect x="10.2" y="480.8" width="12.6" height="8.4" stroke="#d4d4d4" stroke-width="1"/>
<ellipse cx="16.5" cy="485" rx="3.4" ry="2.7" stroke="#9a9a9a" stroke-width="1"/>
</g>

<g id="righticons" stroke="#e2e2e2" fill="none" stroke-width="1.1">
<!-- collapse arrows -->
<g fill="#d0d0d0" stroke="none">
<path d="M480.6 47.9L478.4 50L480.6 52.1ZM484 47.9L481.8 50L484 52.1Z"/>
<path d="M535.6 47.9L533.4 50L535.6 52.1ZM539 47.9L536.8 50L539 52.1Z"/>
<path d="M589.6 47.9L587.4 50L589.6 52.1ZM593 47.9L590.8 50L593 52.1Z"/>
</g>
<!-- grips -->
<g stroke="#636363" stroke-width="1" stroke-dasharray="1 1" stroke-linecap="butt">
<path d="M468 57.5H481M468 85H481M510 57.5H523M510 105H523M566 57.5H579M566 85H579"/>
</g>
<!-- history -->
<g fill="#e6e6e6" stroke="none"><rect x="471.2" y="72.6" width="3" height="3"/></g>
<rect x="471.6" y="64" width="2.2" height="2.2" stroke-width="0.8"/><rect x="471.6" y="68.2" width="2.2" height="2.2" stroke-width="0.8"/>
<path d="M478 66.4C482 66.2 482.6 72 478 75.2" stroke-width="1.5"/><path d="M475.8 66.6L479.4 63.8L479.6 68.8Z" fill="#e6e6e6" stroke="none"/>
<!-- brush settings -->
<g stroke-width="0.8"><path d="M468.4 93.6H471.6M468.4 96H471.6M468.4 98.4H471.6" stroke-dasharray="1 0.6" stroke-linecap="butt" stroke-width="1.3"/></g>
<path d="M481.6 94.2L475.4 99.8" stroke-width="1.9"/><path d="M474.6 99.4C472.8 99.2 473 101.6 471 102.6C473.4 103.6 476 102.6 476.2 100.8Z" fill="#e2e2e2" stroke-width="0.5"/>
<!-- brushes -->
<path d="M468.4 114H481.6M468.4 119.6H475" stroke-width="1.1"/><ellipse cx="471.6" cy="114" rx="2" ry="1.3" fill="#e6e6e6" stroke="none"/><path d="M475.4 119.6L481.4 117V122.2Z" fill="#e6e6e6" stroke="none"/><circle cx="479.8" cy="119.6" r="2" fill="#e6e6e6" stroke="none"/>
<!-- palette -->
<path d="M502.8 66.2C506.6 66.2 508.6 68.2 508.6 70.4C508.6 72.4 506.8 72.4 505.8 72.6C504.8 72.8 505.2 74.6 503.2 74.8C499.2 75 496.6 73.2 496.6 70.6C496.6 68 499.2 66.2 502.8 66.2Z" stroke-width="0.8" fill="#e6e6e6"/>
<g fill="#4e4e4e" stroke="none"><circle cx="499.4" cy="71.4" r="1.05"/><circle cx="500.8" cy="68.8" r="1.05"/><circle cx="503.8" cy="68.2" r="1.05"/><circle cx="506.2" cy="69.8" r="0.95"/></g>
<!-- swatches grid -->
<rect x="497" y="83.6" width="10.8" height="10.8" stroke-width="1.2" style="stroke-linejoin:miter"/><path d="M500.6 83.6V94.4M504.2 83.6V94.4M497 87.2H507.8M497 90.8H507.8" stroke-width="1.2" stroke-linecap="butt"/>
<!-- properties -->
<path d="M497.4 113.8L500 112.4L502.6 113.8V116.8L500 118.2L497.4 116.8Z" stroke-width="0.8"/><path d="M497.4 113.8L500 115.2L502.6 113.8M500 115.2V118.2" stroke-width="0.6"/>
<g fill="#e6e6e6" stroke="none"><rect x="504.4" y="112" width="3.4" height="2.4"/><rect x="504.4" y="115.6" width="3.4" height="2.8"/><rect x="497.2" y="119.8" width="10.6" height="2.2"/></g>
<!-- adjustments -->
<circle cx="502.6" cy="136.8" r="5.1" stroke-width="1.2"/><path d="M499 140.4A5.1 5.1 0 0 0 506.2 133.2Z" fill="#e6e6e6" stroke="none"/>
<!-- bulb -->
<path d="M555.8 73.2C553.2 71 553.2 64.4 558 64.4C562.8 64.4 562.8 71 560.2 73.2V75H555.8Z" stroke-width="1.1"/><path d="M556.4 76.4H559.6" stroke-width="1.1"/>
<!-- library -->
<rect x="553.4" y="91.6" width="9.6" height="11.4" stroke-width="1.1"/><path d="M555.4 91.6V103" stroke-width="0.9"/><path d="M558.4 92V97L559.9 95.8L561.4 97V92Z" fill="#e6e6e6" stroke="none"/>
</g>

<g id="layericons" stroke="#e2e2e2" fill="none" stroke-width="1.1">
<!-- header arrows & close -->
<path d="M430 82.4L427.8 84.5L430 86.6ZM433.4 82.4L431.2 84.5L433.4 86.6Z" fill="#d6d6d6" stroke="none"/>
<path d="M440.4 82.7L444 86.3M444 82.7L440.4 86.3" stroke="#dcdcdc" stroke-width="1.2"/>
<!-- menu -->
<path d="M436.5 96.3H443.5M436.5 98.3H443.5M436.5 100.3H443.5" stroke="#9c9c9c" stroke-width="1" stroke-linecap="butt"/>
<!-- search -->
<circle cx="292.6" cy="120.6" r="2.6" stroke-width="1.1"/><path d="M290.6 122.8L288.4 125.2" stroke-width="1.4"/>
<path d="M334.6 120.8L337 123.2L339.4 120.8" stroke="#c4c4c4" stroke-width="1"/>
<!-- image filter -->
<rect x="353.4" y="117.4" width="8.6" height="7.4" stroke-width="1"/><path d="M355 123L356.8 120.6L358.2 122.2L359.2 121.2L360.6 123Z" fill="#e2e2e2" stroke="none"/>
<!-- adjustment filter -->
<circle cx="374" cy="121" r="3.7" stroke-width="1"/><path d="M371.4 123.6A3.7 3.7 0 0 1 376.6 118.4Z" fill="#e2e2e2" stroke="none"/>
<!-- T filter -->
<text x="391" y="124.8" text-anchor="middle" class="serif" font-weight="bold" font-size="10.5" fill="#e6e6e6" stroke="none">T</text>
<!-- shape filter -->
<rect x="403.4" y="117.6" width="6.6" height="6.6" stroke-width="1"/><g fill="#e2e2e2" stroke="none"><rect x="402.2" y="116.4" width="2.2" height="2.2"/><rect x="409" y="116.4" width="2.2" height="2.2"/><rect x="402.2" y="123.2" width="2.2" height="2.2"/><rect x="409" y="123.2" width="2.2" height="2.2"/></g>
<!-- smart filter -->
<path d="M421.6 120V116.6H425.6L427.8 118.8V125H425.4" stroke-width="0.9"/><rect x="420.2" y="120.6" width="4.6" height="4.4" fill="#e2e2e2" stroke="none"/>
<!-- toggle -->
<rect x="439.2" y="114.2" width="5.8" height="11.4" rx="2.9" fill="#3e3e3e" stroke="none"/><circle cx="442.1" cy="117.2" r="2.8" fill="#ececec" stroke="none"/>
<!-- blend chevron etc -->
<path d="M355 140L357.4 142.4L359.8 140" stroke="#c4c4c4" stroke-width="1"/>
<path d="M437.8 139.6L439.8 141.6L441.8 139.6" stroke="#c4c4c4" stroke-width="1"/>
<path d="M437.8 158.6L439.8 160.6L441.8 158.6" stroke="#c4c4c4" stroke-width="1"/>
<!-- lock: checker -->
<g transform="translate(0,0.6)"><rect x="310.4" y="154.4" width="7.8" height="7.8" stroke-width="0.9"/><g fill="#e2e2e2" stroke="none"><rect x="311.4" y="155.4" width="2" height="2"/><rect x="315.2" y="155.4" width="2" height="2"/><rect x="313.3" y="157.3" width="2" height="2"/><rect x="311.4" y="159.2" width="2" height="2"/><rect x="315.2" y="159.2" width="2" height="2"/></g></g>
<!-- lock: brush -->
<path d="M333.4 154.4L329.2 159.4" stroke-width="2.1"/><path d="M328.4 158.8C326.4 158.6 326.8 161.2 324.8 162.2C327.2 163.2 329.8 162.2 330 160.2Z" fill="#e2e2e2" stroke-width="0.6"/>
<!-- lock: move -->
<g transform="translate(344,158.4)"><path d="M-3 0H3M0 -3V3" stroke-width="1"/><path d="M0 -4.8L-1.8 -2.6H1.8ZM0 4.8L-1.8 2.6H1.8ZM-4.8 0L-2.6 -1.8V1.8ZM4.8 0L2.6 -1.8V1.8Z" fill="#ececec" stroke="none"/></g>
<!-- lock: artboard -->
<path d="M356.6 153.6V161.2H364.4M354.4 155.8H362.2V163.2" stroke-width="1.1" stroke-linecap="butt"/><path d="M358.6 155.8L362.2 159.4" stroke-width="0.9"/>
<!-- lock: padlock -->
<rect x="371" y="158" width="7" height="5" rx="0.6" fill="#ececec" stroke="none"/><path d="M372.6 158V156.6C372.6 154.4 376.4 154.4 376.4 156.6V158" stroke-width="1.1"/>
<!-- eyes -->
<g id="eye1"><path d="M286.4 184.2C288.4 180.9 292.8 180.9 294.8 184.2C292.8 187.5 288.4 187.5 286.4 184.2Z" fill="#ececec" stroke="none"/><circle cx="290.6" cy="184.2" r="1.5" fill="#535353" stroke="none"/></g>
<g id="eye2"><path d="M286.4 212.6C288.4 209.3 292.8 209.3 294.8 212.6C292.8 215.9 288.4 215.9 286.4 212.6Z" fill="#ececec" stroke="none"/><circle cx="290.6" cy="212.6" r="1.5" fill="#535353" stroke="none"/></g>
<!-- thumb 1 -->
<defs><pattern id="chk" x="304.6" y="173.2" width="5.2" height="5.2" patternUnits="userSpaceOnUse"><rect width="5.2" height="5.2" fill="#ffffff"/><rect width="2.6" height="2.6" fill="#c2c2c2"/><rect x="2.6" y="2.6" width="2.6" height="2.6" fill="#c2c2c2"/></pattern></defs>
<rect x="304.6" y="173.2" width="20.6" height="20.2" fill="url(#chk)" stroke="none"/>
<path d="M303 177.6V171.6H310M320 171.6H327V177.6M327 189V195H320M310 195H303V189" stroke="#f0f0f0" stroke-width="1" stroke-linecap="butt" stroke-linejoin="miter"/>
<!-- thumb 2 -->
<rect x="304.2" y="201.4" width="21" height="20.6" fill="#ffffff" stroke="#303030" stroke-width="1"/>
<!-- bg lock -->
<rect x="418.9" y="211.6" width="7.6" height="4.8" rx="0.6" stroke-width="1"/><path d="M420.6 211.6V210.2C420.6 207.9 424.8 207.9 424.8 210.2V211.6" stroke-width="1"/><rect x="422" y="213" width="1.4" height="2" fill="#e2e2e2" stroke="none"/>
<!-- bottom icons -->
<g stroke="#8c8c8c" stroke-width="1"><rect x="309.6" y="245.2" width="5.6" height="4.4" rx="2.2"/><rect x="314" y="245.2" width="5.6" height="4.4" rx="2.2"/></g>
<text x="329" y="251" class="serif" font-style="italic" font-weight="bold" font-size="10.5" fill="#e6e6e6" stroke="none" letter-spacing="-0.4">fx</text>
<rect x="336.6" y="251.4" width="1.4" height="1.4" fill="#e2e2e2" stroke="none"/>
<rect x="346.2" y="243.8" width="9.4" height="6.8" fill="#e6e6e6" stroke="none"/><circle cx="350.9" cy="247.2" r="2.3" fill="#454545" stroke="none"/>
<circle cx="369.4" cy="247" r="3.6" stroke-width="1"/><path d="M366.9 249.5A3.6 3.6 0 0 1 371.9 244.5Z" fill="#e2e2e2" stroke="none"/><rect x="373" y="251.4" width="1.4" height="1.4" fill="#e2e2e2" stroke="none"/>
<path d="M384 244H387L388 245H392.6V250.6H384Z" fill="#dcdcdc" stroke="none"/>
<path d="M403.4 244H410V248.8L407.8 251H403.4Z" stroke-width="1" style="stroke-linejoin:miter"/><path d="M403.4 244H407.4V248H403.4Z" fill="#1e1e1e" stroke="none"/>
<path d="M421 245H429M423.6 245V243.6H426.4V245" stroke-width="0.9"/><path d="M421.8 246H428.2V252.2H421.8Z" fill="#d8d8d8" stroke="none"/><path d="M423.6 247.4V250.8M425 247.4V250.8M426.4 247.4V250.8" stroke="#535353" stroke-width="0.5"/>
</g>

</svg>

<!-- ARROW -->
<svg style="left:0;top:0" width="600" height="495" viewBox="0 0 600 495">
  <path d="M198.4 263.4 L262.6 206 L256.2 200.7 L287.2 191.8 L273.4 220.5 L269.2 213.8 L200.2 265.2 Q198.4 265.8 198.4 263.4Z" fill="#ea1f27" stroke="#ea1f27" stroke-width="0.6" stroke-linejoin="round"/>
</svg>
</body>
</html>
